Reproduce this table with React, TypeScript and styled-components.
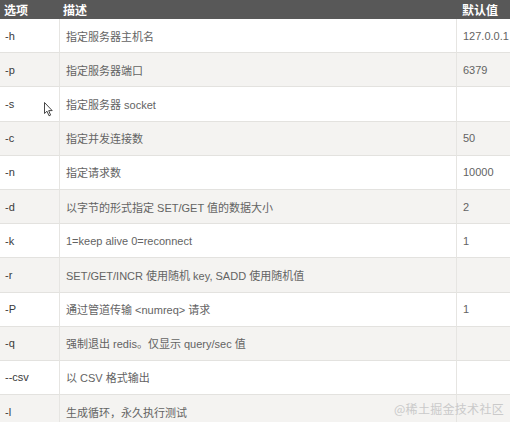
import { Fragment } from "react";
import styled, { createGlobalStyle } from "styled-components";

const GlobalStyle = createGlobalStyle`
  html, body {
    margin: 0;
    padding: 0;
    background: #ffffff;
  }
  body {
    font-family: "Liberation Sans", "Noto Sans CJK SC", sans-serif;
  }
`;

const Page = styled.div`
  position: relative;
  width: 510px;
  height: 422px;
  overflow: hidden;
  background: #ffffff;
`;

const Table = styled.div`
  display: grid;
  grid-template-columns: 60px 397px 1fr;
  width: 510px;
`;

const HeadCell = styled.div<{ $pad?: number }>`
  height: 19px;
  display: flex;
  align-items: center;
  padding-left: ${(props) => props.$pad ?? 5}px;
  background: #585858;
  color: #ffffff;
  font-size: 12px;
  font-weight: bold;
`;

const Cell = styled.div<{ $odd: boolean; $last?: boolean; $opt?: boolean }>`
  height: 34.2px;
  box-sizing: border-box;
  display: flex;
  align-items: center;
  padding-left: ${(props) => (props.$opt ? 5 : 6)}px;
  background: ${(props) => (props.$odd ? "#f4f3f1" : "#ffffff")};
  border-bottom: 1px solid #e3e2df;
  border-right: ${(props) => (props.$last ? "none" : "1px solid #e6e5e2")};
  color: ${(props) => (props.$opt ? "#3a3a3a" : "#636363")};
  font-size: 11px;
  white-space: nowrap;
`;

const Watermark = styled.div`
  position: absolute;
  right: 6px;
  bottom: 5px;
  color: #cacaca;
  font-family: "Noto Sans CJK SC", sans-serif;
  font-size: 12px;
  letter-spacing: 0.3px;
`;

const Pointer = styled.svg`
  position: absolute;
  left: 44px;
  top: 102px;
`;

interface OptionRow {
  opt: string;
  desc: string;
  def: string;
}

const rows: OptionRow[] = [
  { opt: "-h", desc: "指定服务器主机名", def: "127.0.0.1" },
  { opt: "-p", desc: "指定服务器端口", def: "6379" },
  { opt: "-s", desc: "指定服务器 socket", def: "" },
  { opt: "-c", desc: "指定并发连接数", def: "50" },
  { opt: "-n", desc: "指定请求数", def: "10000" },
  { opt: "-d", desc: "以字节的形式指定 SET/GET 值的数据大小", def: "2" },
  { opt: "-k", desc: "1=keep alive 0=reconnect", def: "1" },
  { opt: "-r", desc: "SET/GET/INCR 使用随机 key, SADD 使用随机值", def: "" },
  { opt: "-P", desc: "通过管道传输 <numreq> 请求", def: "1" },
  { opt: "-q", desc: "强制退出 redis。仅显示 query/sec 值", def: "" },
  { opt: "--csv", desc: "以 CSV 格式输出", def: "" },
  { opt: "-l", desc: "生成循环，永久执行测试", def: "" },
];

const App = () => {
  return (
    <>
      <GlobalStyle />
      <Page>
        <Table>
          <HeadCell $pad={4}>选项</HeadCell>
          <HeadCell $pad={3}>描述</HeadCell>
          <HeadCell $pad={5}>默认值</HeadCell>
          {rows.map((row, i) => (
            <Fragment key={row.opt}>
              <Cell $odd={i % 2 === 1} $opt>
                {row.opt}
              </Cell>
              <Cell $odd={i % 2 === 1}>{row.desc}</Cell>
              <Cell $odd={i % 2 === 1} $last>
                {row.def}
              </Cell>
            </Fragment>
          ))}
        </Table>
        <Pointer width="10" height="15" viewBox="0 0 10 15">
          <path
            d="M0.5 0.5 L0.5 11.5 L3 9.2 L5 13.8 L6.6 13.1 L4.7 8.6 L8.2 8.6 Z"
            fill="#ffffff"
            stroke="#333333"
            strokeWidth="0.9"
            strokeLinejoin="round"
          />
        </Pointer>
        <Watermark>@稀土掘金技术社区</Watermark>
      </Page>
    </>
  );
};

export default App;
